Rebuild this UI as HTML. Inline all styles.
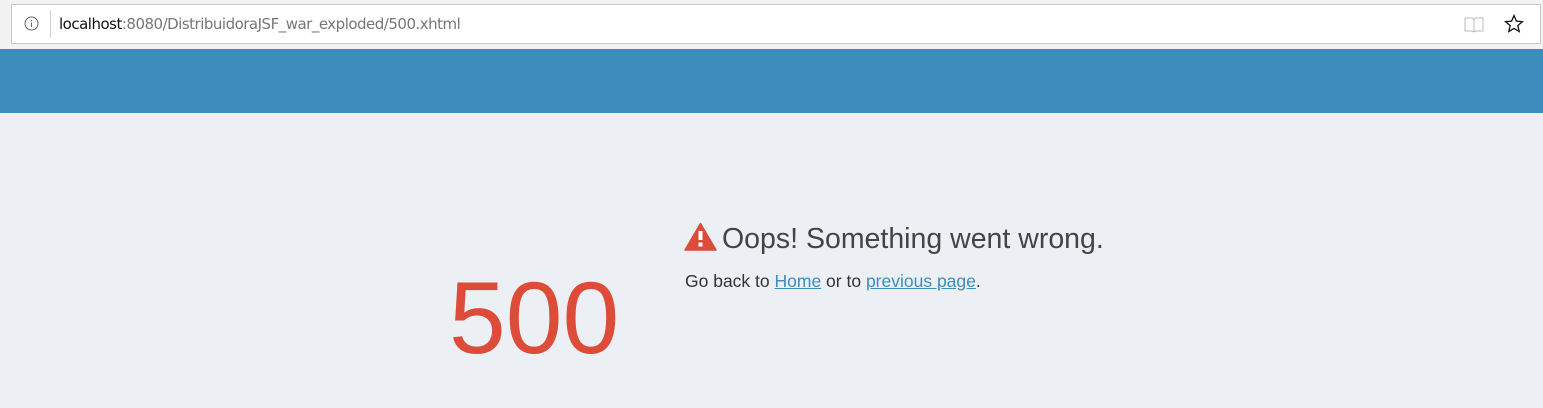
<!DOCTYPE html>
<html><head><meta charset="utf-8"><style>
body{margin:0;width:1543px;height:408px;overflow:hidden;background:#ecf0f5;font-family:"Liberation Sans",sans-serif;position:relative}
.chrome{position:absolute;left:0;top:0;width:1543px;height:49px;background:#f2f2f2}
.addr{position:absolute;left:11px;top:4px;width:1528px;height:38px;background:#fff;border:1px solid #c8c8c8}
.sep{position:absolute;left:38px;top:5px;width:1px;height:28px;background:#d0d0d0}
.url{position:absolute;left:47px;top:10px;font-size:15px;color:#777;font-family:"DejaVu Sans","Liberation Sans",sans-serif;letter-spacing:-0.5px}
.url b{font-weight:normal;color:#111}
.bar{position:absolute;left:0;top:49px;width:1543px;height:64px;background:#3c8dbc}
.big{position:absolute;left:449px;top:253px;font-size:102px;color:#dd4b39;line-height:130px;font-weight:normal}
h3{position:absolute;left:684px;top:222px;margin:0;font-weight:normal;font-size:28.5px;color:#444;white-space:nowrap}
p{position:absolute;left:685px;top:271px;margin:0;font-size:17.5px;color:#333;white-space:nowrap}
a{color:#3c8dbc;text-decoration:underline}
</style></head><body>
<div class="chrome"><div class="addr">
<svg style="position:absolute;left:12px;top:11px" width="15" height="15" viewBox="0 0 15 15"><circle cx="7.5" cy="7.5" r="6.5" fill="none" stroke="#666" stroke-width="1"/><rect x="7" y="6.5" width="1" height="4.5" fill="#666"/><rect x="7" y="4" width="1" height="1.2" fill="#666"/></svg>
<div class="sep"></div>
<div class="url"><b>localhost</b>:8080/DistribuidoraJSF_war_exploded/500.xhtml</div>
<svg style="position:absolute;left:1452px;top:11px" width="20" height="17" viewBox="0 0 20 17"><path d="M1 2h7l2 1.5L12 2h7v13h-7l-2 1-2-1H1z M10 3.5V16" fill="none" stroke="#bbb" stroke-width="1"/></svg>
<svg style="position:absolute;left:1492px;top:9px" width="20" height="20" viewBox="0 0 20 20"><path d="M10 1.5l2.4 5.6 6 .5-4.6 4 1.4 5.9L10 14.4l-5.2 3.1 1.4-5.9-4.6-4 6-.5z" fill="none" stroke="#111" stroke-width="1.3" stroke-linejoin="miter"/></svg>
</div></div>
<div class="bar"></div>
<div class="big">500</div>
<h3><svg width="33" height="29" viewBox="0 0 33 29" style="vertical-align:-3px;margin-right:5px"><path d="M16.5 1.5L32 28H1z" fill="#dd4b39" stroke="#dd4b39" stroke-width="1.5" stroke-linejoin="round"/><rect x="14.5" y="9" width="4" height="9" fill="#fff"/><rect x="14.5" y="20.5" width="4" height="4" fill="#fff"/></svg>Oops! Something went wrong.</h3>
<p>Go back to <a>Home</a> or to <a>previous page</a>.</p>
</body></html>
